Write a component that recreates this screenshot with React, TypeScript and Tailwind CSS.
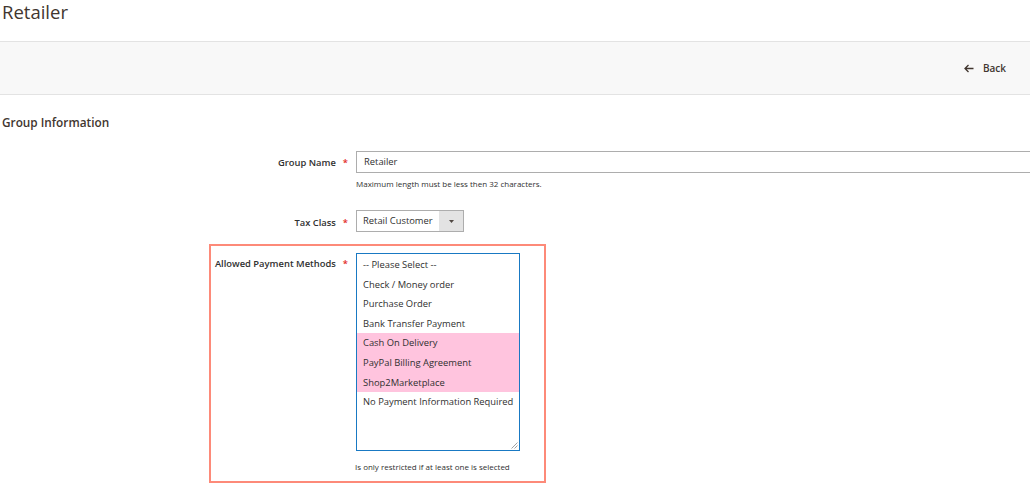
import React from "react";

const options = [
  { label: "-- Please Select --", selected: false },
  { label: "Check / Money order", selected: false },
  { label: "Purchase Order", selected: false },
  { label: "Bank Transfer Payment", selected: false },
  { label: "Cash On Delivery", selected: true },
  { label: "PayPal Billing Agreement", selected: true },
  { label: "Shop2Marketplace", selected: true },
  { label: "No Payment Information Required", selected: false },
];

function Req() {
  return <span className="text-[#e22626] ml-[7px] text-[9.4px]">*</span>;
}

export default function App() {
  return (
    <div
      className="w-[1030px] h-[503px] bg-white text-[#303030] overflow-hidden"
      style={{ fontFamily: '"Open Sans", "Liberation Sans", sans-serif' }}
    >
      <h1 className="text-[18.5px] leading-[26px] font-normal text-[#41362f] pl-[2px] -mt-[1px]">Retailer</h1>
      <div className="mt-[16px] h-[54px] bg-[#f8f8f8] border-y border-[#e3e3e3] flex items-center justify-end pr-[24px]">
        <div className="flex items-center gap-[9px] text-[10px] font-semibold text-[#41362f]">
          <svg width="10" height="9" viewBox="0 0 10 9" fill="none" stroke="#41362f" strokeWidth="1.3">
            <path d="M9.5 4.5H1.2M4.5 1L1 4.5L4.5 8" />
          </svg>
          <span>Back</span>
        </div>
      </div>
      <div className="pl-[2px] mt-[19px] text-[11.8px] font-semibold text-[#41362f] leading-[16px]">Group Information</div>

      <div className="mt-[21px] flex">
        <div className="w-[356px] h-[22px] pr-[8px] pt-[1px] text-right text-[9.4px] font-semibold text-[#303030] leading-[22px] whitespace-nowrap">
          Group Name<Req />
        </div>
        <div className="flex-1">
          <div className="h-[22px] border border-[#adadad] pl-[7px] text-[9.4px] leading-[20px] text-[#303030] -mr-[2px]">Retailer</div>
          <div className="text-[8px] leading-[10px] mt-[6px] text-[#303030]">Maximum length must be less then 32 characters.</div>
        </div>
      </div>

      <div className="mt-[21px] flex">
        <div className="w-[356px] h-[22px] pr-[8px] pt-[2px] text-right text-[9.4px] font-semibold text-[#303030] leading-[22px] whitespace-nowrap">
          Tax Class<Req />
        </div>
        <div className="w-[108px] h-[22px] border border-[#adadad] flex text-[9.4px] leading-[20px]">
          <div className="flex-1 pl-[6px] whitespace-nowrap">Retail Customer</div>
          <div className="w-[24px] bg-[#e3e3e3] flex items-center justify-center">
            <svg width="5" height="3" viewBox="0 0 5 3"><path d="M0 0H5L2.5 3Z" fill="#514943" /></svg>
          </div>
        </div>
      </div>

      <div className="mt-[12px] ml-[209px] w-[337px] border-2 border-[#fd8a79] flex pt-[7px] pb-[9px]">
        <div className="w-[145px] pr-[8px] pt-[1px] text-right text-[9.4px] font-semibold text-[#303030] leading-[20px] whitespace-nowrap">
          Allowed Payment Methods<Req />
        </div>
        <div>
          <div className="relative w-[164px] h-[198px] border border-[#1979c3] pt-[1px]">
            {options.map((o) => (
              <div
                key={o.label}
                className={`h-[19.6px] pl-[6px] text-[9.4px] leading-[19.6px] whitespace-nowrap ${o.selected ? "bg-[#ffc4de] text-[#303030]" : "text-[#303030]"}`}
              >
                {o.label}
              </div>
            ))}
            <svg className="absolute right-[1px] bottom-[1px]" width="8" height="8" viewBox="0 0 8 8" stroke="#8a8a8a" strokeWidth="0.8">
              <path d="M7.5 1.5L1.5 7.5M7.5 4.5L4.5 7.5" />
            </svg>
          </div>
          <div className="text-[8px] leading-[10px] mt-[11px] -ml-[1px] text-[#303030]">Is only restricted if at least one is selected</div>
        </div>
      </div>
    </div>
  );
}
